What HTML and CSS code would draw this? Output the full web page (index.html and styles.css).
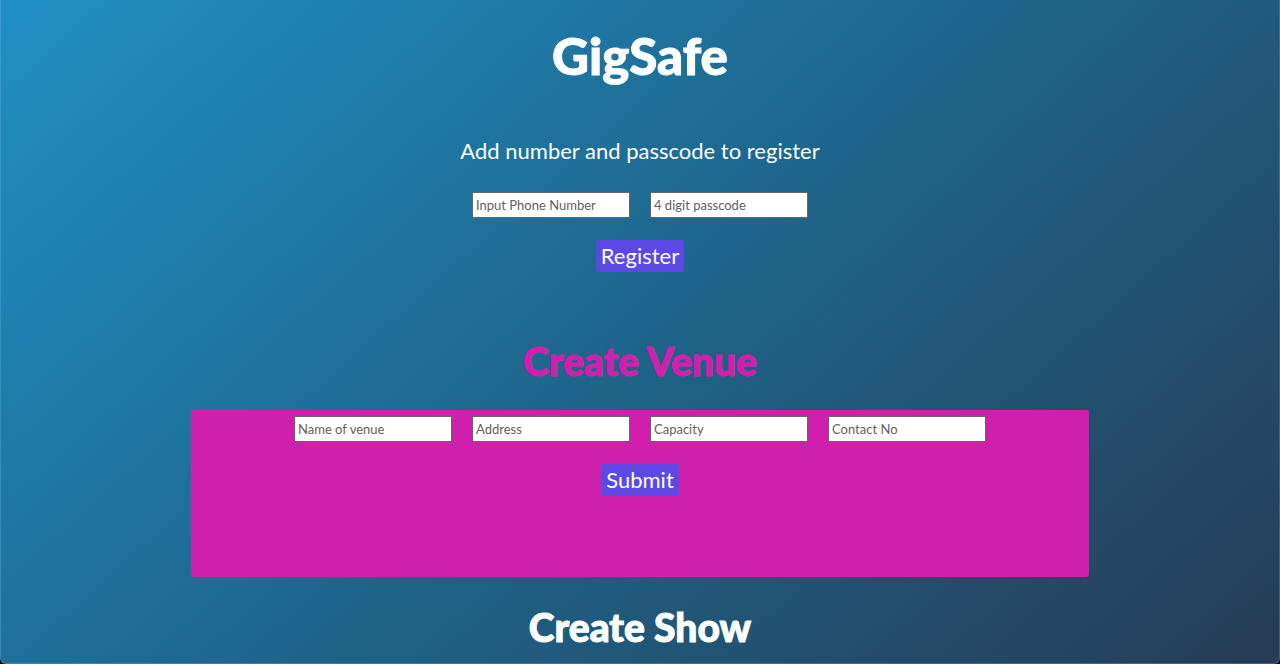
FILE: index.html
```html
<!DOCTYPE html>
<html lang="en">
<head>
<meta charset="utf-8">
<title>GigSafe</title>
<link rel="stylesheet" href="styles.css">
</head>
<body>
<main class="page">
  <h1 class="title">GigSafe</h1>
  <form class="register">
    <p class="lead">Add number and passcode to register</p>
    <div class="fields">
      <input class="field" type="tel" placeholder="Input Phone Number" aria-label="Phone number">
      <input class="field" type="text" placeholder="4 digit passcode" aria-label="Passcode">
    </div>
    <button class="button" type="button">Register</button>
  </form>
  <h2 class="heading heading-venue">Create Venue</h2>
  <form class="venue">
    <div class="fields">
      <input class="field" type="text" placeholder="Name of venue" aria-label="Name of venue">
      <input class="field" type="text" placeholder="Address" aria-label="Address">
      <input class="field" type="text" placeholder="Capacity" aria-label="Capacity">
      <input class="field" type="tel" placeholder="Contact No" aria-label="Contact number">
    </div>
    <button class="button" type="button">Submit</button>
  </form>
  <h2 class="heading">Create Show</h2>
</main>
</body>
</html>
```

FILE: styles.css
```css
* {
  box-sizing: border-box;
}

body {
  margin: 0;
  background: #05070c;
  color: #fafeff;
  font-family: "Gill Sans", Lato, sans-serif;
  font-size: 22px;
}

.page {
  min-height: 100vh;
  padding: 28px calc(15% - 2px) 8px;
  border: 1px solid rgba(110, 170, 205, 0.35);
  border-top: 0;
  border-radius: 0 0 6px 6px;
  background: linear-gradient(138deg, #2090c5, #1e658b 50%, #273b54) border-box;
  text-align: center;
}

.title {
  margin: 0;
  font-size: 51px;
  font-weight: 900;
  line-height: 56px;
  -webkit-text-stroke: 1px currentColor;
}

.register {
  padding: 51px 0 67px;
}

.lead {
  margin: 0 0 25px;
  line-height: 32px;
}

.fields {
  display: flex;
  flex-wrap: wrap;
  justify-content: center;
  gap: 20px;
  margin-bottom: 22px;
}

.field {
  width: 158px;
  height: 26px;
  padding: 1px 3px;
  border: 1px solid #666;
  border-radius: 0;
  background: #fff;
  color: #222;
  font-family: inherit;
  font-size: 13px;
}

.field::placeholder {
  color: #5f5f5f;
}

.button {
  height: 32px;
  padding: 0 5px;
  border: 0;
  border-radius: 3px;
  background: #5d48e5;
  color: #fafeff;
  font-family: inherit;
  font-size: 22px;
  line-height: 32px;
  vertical-align: top;
}

.heading {
  margin: 0;
  font-size: 39px;
  font-weight: 900;
  line-height: 44px;
  -webkit-text-stroke: 1px currentColor;
}

.heading-venue {
  color: #d01fac;
}

.venue {
  min-height: 167px;
  margin: 27px 0 28px;
  padding: 6px;
  border-radius: 3px;
  background: #d01fac;
}
```
